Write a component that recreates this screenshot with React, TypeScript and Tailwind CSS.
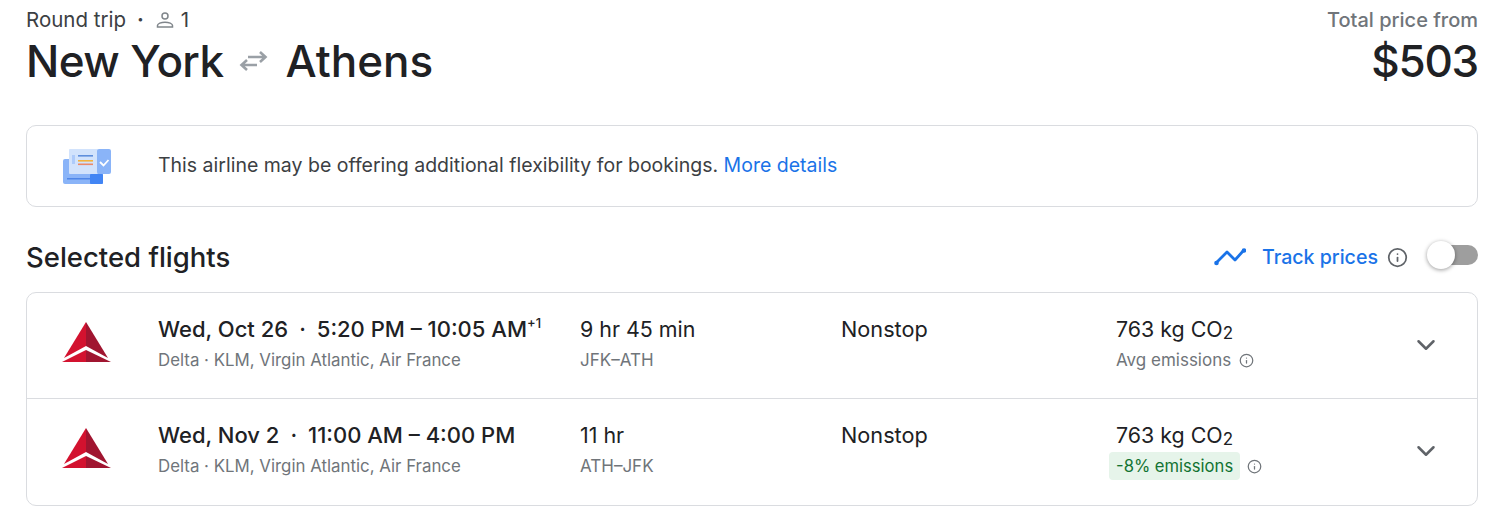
import React from 'react';
import { ChevronDown, Info } from 'lucide-react';

const flights = [
  {
    date: 'Wed, Oct 26',
    times: '5:20 PM – 10:05 AM',
    plus: '+1',
    duration: '9 hr 45 min',
    route: 'JFK–ATH',
    badge: false,
  },
  {
    date: 'Wed, Nov 2',
    times: '11:00 AM – 4:00 PM',
    plus: '',
    duration: '11 hr',
    route: 'ATH–JFK',
    badge: true,
  },
];

function DeltaLogo() {
  return (
    <svg width="50" height="42" viewBox="0 0 50 42" className="shrink-0">
      <polygon points="24,0 24,24 2,36" fill="#d3122f" />
      <polygon points="24,0 24,24 46,36" fill="#a01530" />
      <polygon points="24,28 0,40 24,40" fill="#d3122f" />
      <polygon points="24,28 49,40 24,40" fill="#a01530" />
    </svg>
  );
}

function TicketIcon() {
  return (
    <svg width="48" height="35" viewBox="0 0 48 35" className="shrink-0">
      <rect x="0" y="10" width="40" height="25" rx="2" fill="#8ab4f8" />
      <rect x="27" y="25" width="13" height="10" rx="1" fill="#4285f4" />
      <rect x="4" y="29" width="23" height="1.5" fill="#4f86e8" />
      <rect x="6" y="0" width="29" height="25" rx="1" fill="#d2e3fc" />
      <rect x="34" y="0" width="14" height="25" rx="2" fill="#8ab4f8" />
      <path d="M37 13l3.5 3.5 5-5.5" stroke="#fff" strokeWidth="1.8" fill="none" />
      <rect x="9" y="6" width="3" height="9" fill="#aecbfa" />
      <rect x="15" y="6" width="15" height="1.6" fill="#5f8fdc" />
      <rect x="15" y="11" width="15" height="1.6" fill="#f2b33c" />
      <rect x="15" y="14.5" width="15" height="1.6" fill="#ea8a6a" />
    </svg>
  );
}

function PersonIcon() {
  return (
    <svg width="18" height="18" viewBox="0 0 18 18" fill="none" stroke="#80868b" strokeWidth="1.5">
      <circle cx="9" cy="5" r="3" />
      <path d="M1.5 16v-1.4c0-2 3.6-3.4 7.5-3.4s7.5 1.4 7.5 3.4V16z" />
    </svg>
  );
}

function SwapIcon() {
  return (
    <svg width="30" height="24" viewBox="0 0 30 24" fill="none" stroke="#9aa0a6" strokeWidth="2.6">
      <path d="M9 8h17M21 3l5.5 5-5.5 5" />
      <path d="M18 16H3M8 11l-5.5 5 5.5 5" />
    </svg>
  );
}

function TrendIcon() {
  return (
    <svg width="32" height="18" viewBox="0 0 32 18" fill="none" stroke="#1a73e8" strokeWidth="2.8" strokeLinejoin="round">
      <path d="M2 15 L13 4 L21 12 L30 2" />
      <circle cx="2.5" cy="15" r="2.3" fill="#1a73e8" stroke="none" />
      <circle cx="30" cy="2.5" r="2.3" fill="#1a73e8" stroke="none" />
    </svg>
  );
}

export default function App() {
  return (
    <div className="h-[523px] w-[1500px] overflow-hidden bg-white pl-[26px] pr-[22px] font-['Inter','Liberation_Sans',sans-serif] text-[#202124]">
      {/* Header */}
      <div className="flex h-[125px] justify-between pt-[7px]">
        <div>
          <div className="flex h-[26px] items-center text-[20.5px] text-[#3c4043]">
            <span>Round trip</span>
            <span className="mr-[12px] ml-[11px] font-bold">·</span>
            <PersonIcon />
            <span className="ml-[7px]">1</span>
          </div>
          <div className="mt-[1px] flex items-center text-[44px] leading-[54px] font-medium">
            <span className="tracking-[-0.6px]">New York</span>
            <span className="mx-[16px]">
              <SwapIcon />
            </span>
            <span>Athens</span>
          </div>
        </div>
        <div className="text-right">
          <div className="h-[26px] text-[20px] leading-[26px] font-medium text-[#70757a]">Total price from</div>
          <div className="mt-[1px] text-[44px] leading-[54px] font-medium tracking-[-1.2px]">$503</div>
        </div>
      </div>

      {/* Flexibility notice */}
      <div className="flex h-[82px] items-center rounded-[10px] border border-[#dadce0] pl-[36px]">
        <TicketIcon />
        <span className="ml-[47px] text-[19.5px] text-[#3c4043]">
          This airline may be offering additional flexibility for bookings.{' '}
          <span className="text-[#1a73e8]">More details</span>
        </span>
      </div>

      {/* Selected flights heading */}
      <div className="flex h-[85px] items-center justify-between pt-[16px]">
        <h2 className="text-[27.5px] font-medium">Selected flights</h2>
        <div className="flex items-center">
          <TrendIcon />
          <span className="ml-[16px] text-[19.6px] font-medium text-[#1a73e8]">Track prices</span>
          <Info size={21} className="ml-[9px] text-[#5f6368]" />
          <div className="relative mb-[5px] ml-[33px] h-[20px] w-[37px] rounded-r-full bg-[#9e9e9e]">
            <div className="absolute top-[-4px] left-[-14px] h-[28px] w-[28px] rounded-full bg-white shadow-[0_1px_4px_rgba(0,0,0,0.4)]" />
          </div>
        </div>
      </div>

      {/* Flight rows */}
      <div className="divide-y divide-[#dadce0] rounded-[10px] border border-[#dadce0]">
        {flights.map((f) => (
          <div key={f.date} className="flex h-[106px] items-start">
            <div className="w-[131px] pt-[29px] pl-[35px]">
              <DeltaLogo />
            </div>
            <div className="w-[422px] pt-[21px]">
              <div className="flex h-[30px] items-center text-[22px] font-medium">
                <span>{f.date}</span>
                <span className="mx-[11px]">·</span>
                <span>{f.times}</span>
                {f.plus && <sup className="text-[13px]">{f.plus}</sup>}
              </div>
              <div className="mt-[4px] text-[16.85px] text-[#70757a]">Delta · KLM, Virgin Atlantic, Air France</div>
            </div>
            <div className="w-[261px] pt-[21px]">
              <div className="flex h-[30px] items-center text-[21.4px]">{f.duration}</div>
              <div className="mt-[4px] text-[17px] text-[#70757a]">{f.route}</div>
            </div>
            <div className="w-[275px] pt-[21px]">
              <div className="flex h-[30px] items-center text-[21.7px]">Nonstop</div>
            </div>
            <div className="w-[295px] pt-[21px]">
              <div className="flex h-[30px] items-center text-[21.4px]">
                763 kg CO<sub className="text-[17px]">2</sub>
              </div>
              {f.badge ? (
                <div className="mt-[2px] flex items-center text-[16.6px]">
                  <span className="ml-[-7px] rounded-[4px] bg-[#e6f4ea] px-[7px] py-[2px] leading-[24px] text-[#137333]">
                    -8% emissions
                  </span>
                  <Info size={15} className="ml-[7px] text-[#70757a]" />
                </div>
              ) : (
                <div className="mt-[4px] flex items-center text-[17px] text-[#70757a]">
                  <span>Avg emissions</span>
                  <Info size={15} className="ml-[8px] text-[#70757a]" />
                </div>
              )}
            </div>
            <div className="pt-[37px]">
              <ChevronDown size={30} className="text-[#5f6368]" />
            </div>
          </div>
        ))}
      </div>
    </div>
  );
}
